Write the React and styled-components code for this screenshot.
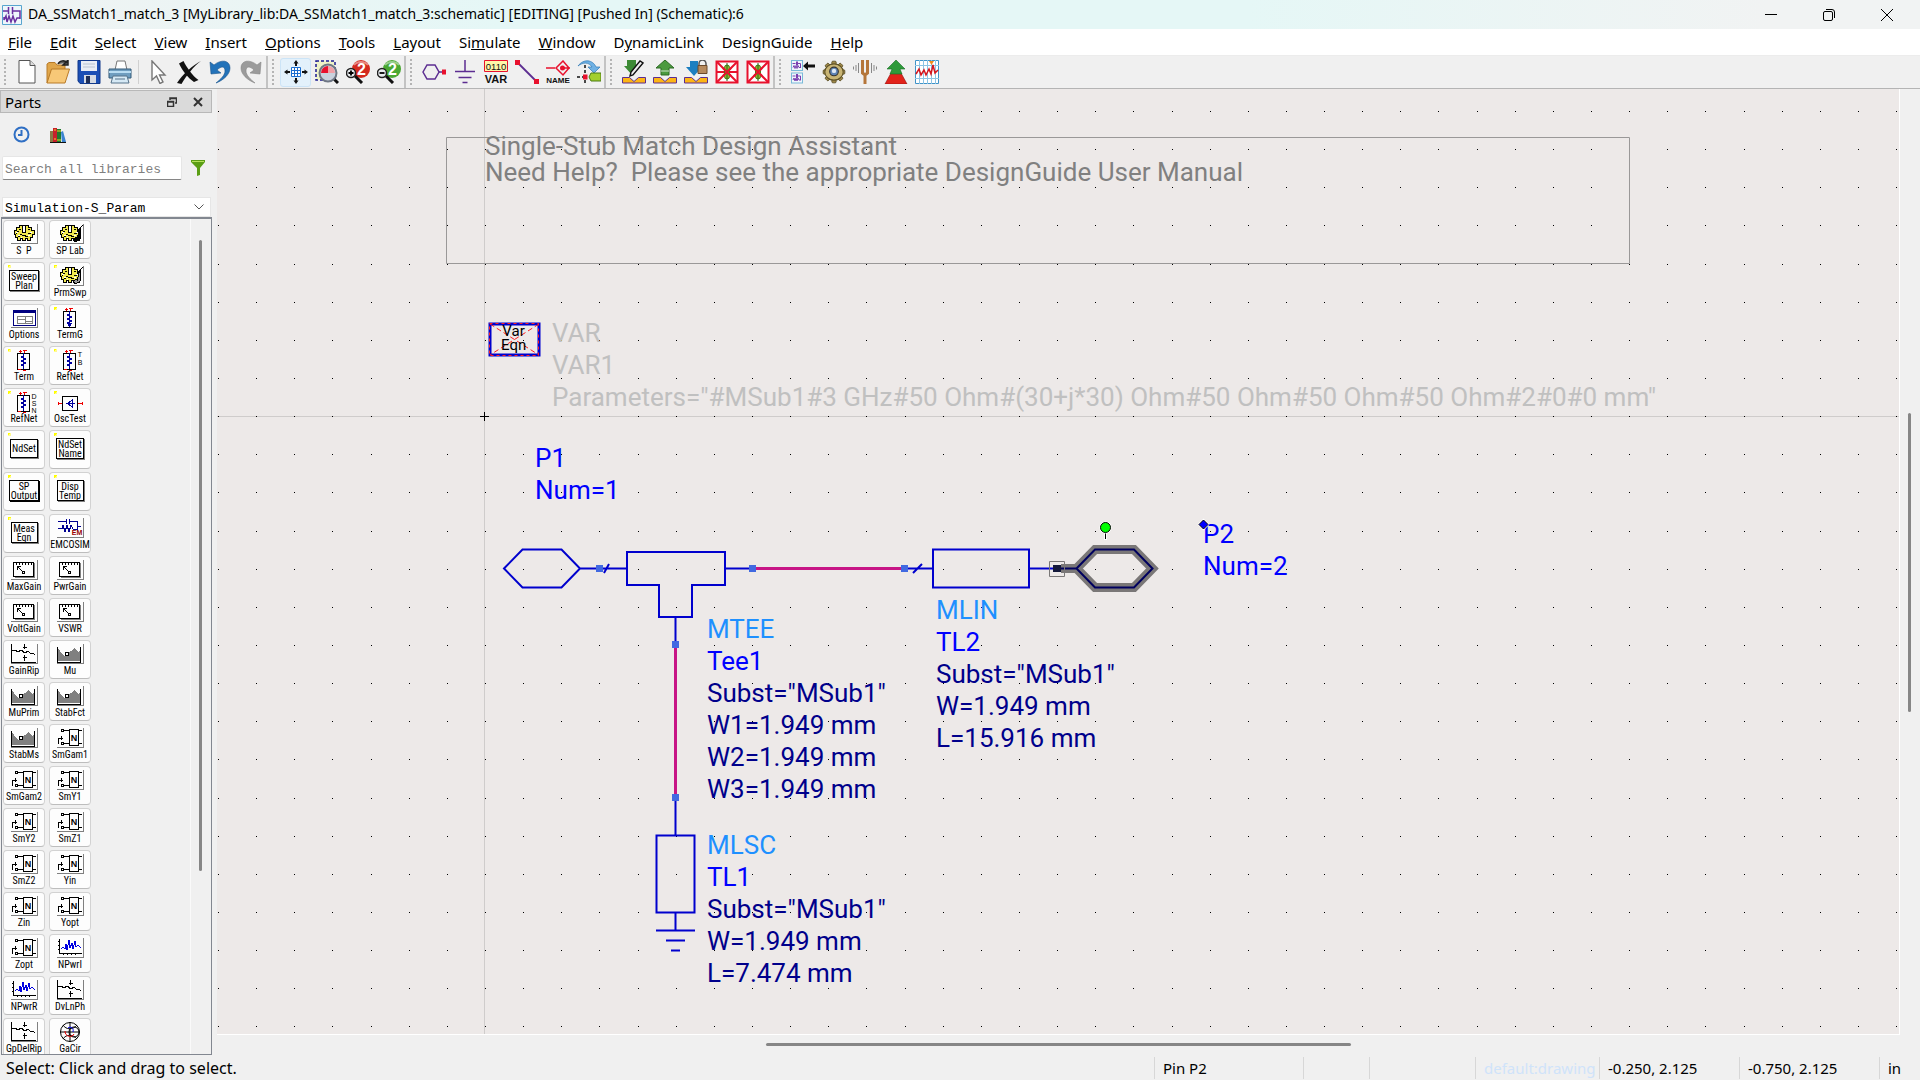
import React from "react";
import styled, { createGlobalStyle } from "styled-components";

const UI = `"Noto Sans", "Open Sans", sans-serif`;

const Global = createGlobalStyle`
  * { box-sizing: border-box; }
  body { margin: 0; background: #f0f0f0; color: #000; font-family: ${UI}; overflow: hidden; }
  button, input, select { font: inherit; color: inherit; margin: 0; }
  svg { display: block; flex: none; }
`;

/* ---------- window frame ---------- */
const Window = styled.div`
  display: flex;
  flex-direction: column;
  height: 100vh;
`;
const TitleBar = styled.header`
  display: flex;
  align-items: center;
  gap: 6px;
  height: 29px;
  padding: 0 4px 0 2px;
  background: linear-gradient(90deg, #f0f3f3 0%, #e5f7f6 26%, #e5f7f6 65%, #f1f3f3 92%);
`;
const Title = styled.h1`
  flex: 1;
  margin: 0;
  padding-bottom: 1px;
  font-size: 14px;
  line-height: 20px;
  font-weight: 400;
`;
const CaptionButtons = styled.div`
  display: flex;
`;
const CaptionButton = styled.button`
  display: grid;
  place-items: center;
  width: 58px;
  height: 28px;
  padding: 0;
  border: 0;
  background: none;
`;
const MenuBar = styled.nav`
  display: flex;
  gap: 18px;
  height: 27px;
  padding: 2px 8px 0;
  background: #fff;
  border-bottom: 1px solid #ececec;
`;
const MenuItem = styled.button`
  padding: 0;
  border: 0;
  background: none;
  font-size: 15px;
  line-height: 22px;
  height: 22px;
`;
const ToolBar = styled.div`
  display: flex;
  height: 33px;
  background: #f0f0f0;
  border-bottom: 1px solid #b4b4b4;
`;
const ToolGroup = styled.div`
  display: flex;
  align-items: center;
  position: relative;
  padding-left: ${(p) => (p.$first ? 11 : 12)}px;
  border-right: ${(p) => (p.$last ? "0" : "2px solid #c3c3c3")};
`;
const Handle = styled.span`
  position: absolute;
  left: 4px;
  top: 3px;
  width: 2px;
  height: 26px;
  background: repeating-linear-gradient(#b4b4b4 0 2px, transparent 2px 4px);
`;
const ToolButton = styled.button`
  display: grid;
  place-items: center;
  width: 31px;
  height: 29px;
  padding: 0;
  border-radius: 3px;
  border: 1px solid ${(p) => (p.$active ? "#cce4f7" : "transparent")};
  background: ${(p) => (p.$active ? "#e3f1fb" : "none")};
`;
const ToolGap = styled.span`
  width: 1px;
  height: 24px;
  margin: 0 3px;
  background: #d0d0d0;
`;
const Body = styled.div`
  display: flex;
  flex: 1;
  min-height: 0;
`;

/* ---------- parts dock ---------- */
const Dock = styled.aside`
  display: flex;
  flex-direction: column;
  width: 217px;
  padding: 1px 5px 0 0;
`;
const DockHeader = styled.div`
  display: flex;
  align-items: center;
  height: 23px;
  padding: 0 0 0 4px;
  background: #dadada;
  border: 1px solid #b8b8b8;
  font-size: 15px;
  line-height: 20px;
`;
const DockTitle = styled.h2`
  flex: 1;
  margin: 0;
  font-size: 15px;
  font-weight: 400;
`;
const PlainButton = styled.button`
  display: grid;
  place-items: center;
  width: ${(p) => p.$w || 26}px;
  height: 20px;
  padding: 0;
  border: 0;
  background: none;
`;
const DockTabs = styled.div`
  display: flex;
  align-items: center;
  gap: 11px;
  height: 43px;
  padding-left: 8px;
`;
const SearchRow = styled.div`
  display: flex;
  align-items: center;
  gap: 2px;
  padding-left: 2px;
  margin-bottom: 17px;
`;
const Search = styled.input`
  flex: 1;
  min-width: 0;
  height: 24px;
  padding: 3px 2px 0;
  border: 1px solid #e6e6e6;
  border-bottom: 1px solid #868686;
  border-radius: 2px;
  background: #fff;
  font: 13px "Liberation Mono", monospace;
  &::placeholder { color: #7f7f7f; opacity: 1; }
`;
const PickerWrap = styled.label`
  display: grid;
  grid-template-columns: 1fr 22px;
  align-items: center;
  margin: 0 1px 0 2px;
  height: 20px;
  background: #fff;
  border: 1px solid #e6e6e6;
  svg { grid-area: 1 / 2; justify-self: center; pointer-events: none; }
`;
const Picker = styled.select`
  grid-area: 1 / 1 / 2 / 3;
  appearance: none;
  height: 18px;
  padding: 2px 2px 0;
  border: 0;
  background: none;
  font: 13px "Liberation Mono", monospace;
`;
const PartsFrame = styled.div`
  display: flex;
  flex: 1;
  min-height: 0;
  margin: 0 0 0 1px;
  border: 1px solid #828790;
  border-top-width: 2px;
`;
const PartsGrid = styled.div`
  display: grid;
  flex: 1;
  grid-template-columns: repeat(auto-fill, 42px);
  grid-auto-rows: 39px;
  gap: 3px 4px;
  align-content: start;
  padding: 1px 96px 0 1px;
  overflow: hidden;
  border-right: 1px solid #fafafa;
`;
const Part = styled.button`
  position: relative;
  display: flex;
  flex-direction: column;
  align-items: center;
  justify-content: ${(p) => (p.$boxed ? "center" : "flex-start")};
  padding: ${(p) => (p.$boxed ? "0 0 2px" : "2px 0 0")};
  border: 1px solid #d2d2d2;
  border-bottom-color: #bdbdbd;
  border-radius: 4px;
  background: #fdfdfd;
  font: 10px/10px "Liberation Sans Narrow", "Roboto Condensed", Roboto, sans-serif;
  white-space: pre;
`;
const Caption = styled.span`
  line-height: 11px;
`;
const Boxed = styled.span`
  display: grid;
  place-items: center;
  align-content: center;
  min-width: 27px;
  height: ${(p) => (p.$two ? 21 : 19)}px;
  padding: 0 1px;
  line-height: 9px;
  border: 1px solid #000;
  box-shadow: 1px 1px 0 ${(p) => (p.$heavy ? "#000" : "#808080")};
`;
const Mark = styled.i`
  position: absolute;
  left: 4px;
  top: 2px;
  width: 3px;
  height: 3px;
  background: linear-gradient(135deg, #ff0 50%, #fffa90 50%);
`;
const Track = styled.div`
  display: flex;
  flex-direction: ${(p) => (p.$across ? "row" : "column")};
  align-items: center;
  ${(p) => (p.$across ? "height" : "width")}: 20px;
  ${(p) => (p.$across ? "padding-bottom" : "padding-right")}: 2px;
  flex: none;
`;
const Space = styled.span`
  flex: ${(p) => p.$n} 1 0;
`;
const Thumb = styled.span`
  flex: ${(p) => p.$n} 1 0;
  ${(p) => (p.$across ? "height" : "width")}: 3px;
  border-radius: 2px;
  background: #868686;
`;

/* ---------- schematic ---------- */
const Work = styled.main`
  display: grid;
  flex: 1;
  min-width: 0;
  grid-template-columns: 1fr 20px;
  grid-template-rows: 1fr 20px;
`;
const Canvas = styled.div`
  position: relative;
  overflow: hidden;
  background: #ede9e8;
  border-right: 1px solid #fff;
  border-bottom: 1px solid #fff;
`;
const Drawing = styled.svg`
  position: absolute;
  left: 0;
  top: 0;
  overflow: visible;
`;
const Label = styled.div`
  position: absolute;
  left: ${(p) => p.$x}px;
  top: ${(p) => p.$y}px;
  font: ${(p) => p.$size || 26}px/${(p) => p.$lh || 32}px Roboto, sans-serif;
  color: ${(p) => p.$color || "#00008b"};
  text-align: ${(p) => (p.$center ? "center" : "left")};
  white-space: pre;
`;
const Line = styled.div`
  color: ${(p) => p.$color || "inherit"};
`;

/* ---------- status bar ---------- */
const StatusBar = styled.footer`
  display: flex;
  align-items: center;
  height: 25px;
  padding-left: 6px;
  font-size: 15px;
  line-height: 22px;
`;
const StatusText = styled.span`
  flex: 1;
  font-size: 16px;
`;
const StatusCell = styled.span`
  width: ${(p) => p.$w}px;
  height: 22px;
  padding-left: 8px;
  border-left: 1px solid #d7d7d7;
  color: ${(p) => (p.$faint ? "#cfe3fa" : "#000")};
  white-space: nowrap;
`;

/* ---------- tool bar icons ---------- */
const I = ({ children, s = 24 }) => (
  <svg width={s} height={s} viewBox="0 0 24 24" fill="none" aria-hidden="true">{children}</svg>
);
const Lens = ({ color, sign }) => (
  <I>
    <circle cx="15" cy="9" r="9" fill={color} />
    <path d="M8 5a8 6 0 0 1 14 0" stroke="#fff" strokeOpacity=".45" strokeWidth="2" />
    <text x="15.500" y="14.500" fontFamily="Liberation Sans" fontWeight="700" fontSize="16" fill="#fff" textAnchor="middle">2</text>
    <path d="M9 16l7 7" stroke="#111" strokeWidth="3" />
    <circle cx="5" cy="13" r="4.500" fill="#e9edf0" stroke="#222" strokeWidth="1.500" />
    <path d={sign === "+" ? "M2.500 13h5M5 10.500v5" : "M2.500 13h5"} stroke="#000" strokeWidth="1.800" />
  </I>
);
const Tray = () => <path d="M.5 17.500h7l4.500 4 4.500-4h7v5.500H.5z" fill="#fdb515" stroke="#5c2d91" />;
const Crossed = ({ full }) => (
  <I>
    <path d="M1.500 1.500h21v21h-21z" fill="#fff" stroke="#e8112d" strokeWidth="2" />
    <path d={full ? "M2 2l20 20M22 2L2 22M2 12h20" : "M2 2l20 20M22 2L2 22"} stroke="#e8112d" strokeWidth="2" />
    <rect x="9.500" y="5" width="5" height="14" rx="2.500" fill="#8fb52a" stroke="#4b7d14" />
    <path d="M12 3v18" stroke="#2b6a1d" />
    <path d="M8 8l8 8M16 8l-8 8" stroke="#e8112d" strokeWidth="2" />
  </I>
);
const MiniSch = ({ y }) => (
  <g stroke="#7a3fb0">
    <rect x=".5" y={y} width="11" height="10" fill="#eef6fb" stroke="#79b9d8" />
    <path d={`M1.500 ${y + 3}h3m1-2v4m1-4v4m0-2h3v4M2 ${y + 7}l1-2 1 3 1-3 1 3 1-3 1 2h2`} />
  </g>
);
const gearTeeth = [...Array(8)].map((_, i) => i * 45);

const icons = {
  New: <I><path d="M4 .5h11l5 5V23H4z" fill="#fff" stroke="#555" /><path d="M15 .5v5h5" fill="#ddd" stroke="#555" /></I>,
  Open: <I><path d="M1 23V4l2-1.500h6L11 5h8v4" fill="#e0a64a" stroke="#b87a28" /><path d="M1 23L5.500 9h18L19 23z" fill="#f7c877" stroke="#b87a28" /><path d="M12 4c2-4 7-4 9-1M22 0v5h-5z" stroke="#222" strokeWidth="1.500" fill="#222" fillOpacity=".7" /></I>,
  Save: <I><path d="M1 .5h22v23H3L1 21z" fill="#1b4fb5" stroke="#12398a" /><path d="M4 1h16v10H4z" fill="#e9eef5" /><path d="M6 4h12M6 7h12" stroke="#b9c4d2" /><path d="M7 15h12v8H7z" fill="#d5dbe4" /><path d="M9 16h4v7H9z" fill="#1f2f57" /></I>,
  Print: <I><path d="M7 10L9 1h8l2 9z" fill="#fff" stroke="#777" /><path d="M1 9h22v9H1z" fill="#6f9dbf" stroke="#345b78" /><path d="M1 12h22" stroke="#b9dcf2" strokeWidth="2" /><path d="M5 16h14l2 7H3z" fill="#d6e9f5" stroke="#56738a" /><path d="M7 19h10" stroke="#56738a" /></I>,
  Pointer: <I><path d="M6 1v19l4.500-4 3.500 7.500 3-1.500-3.500-7H19z" fill="#fff" stroke="#777" strokeWidth="1.400" /></I>,
  Delete: <I><path d="M2 3.500L6.500 1c3 6 9 15 15 19l-4.500 2C11 18 5.500 11 2 3.500z" fill="#111" /><path d="M24 1C16 5 5 15 0 23l4.500 1C9 16 17 6 24 1z" fill="#111" /></I>,
  Undo: <I><path d="M2 2l1 12 10-1-4-3c4-4 8-4 8 1 0 4-4 8-9 12 8-3 14-9 14-15C22 0 13-1 6 5z" fill="#2272b9" stroke="#15528c" strokeWidth=".6" /></I>,
  Redo: <I><path d="M22 2l-1 12-10-1 4-3c-4-4-8-4-8 1 0 4 4 8 9 12C8 20 2 14 2 8 2 0 11-1 18 5z" fill="#9b9b9b" stroke="#858585" strokeWidth=".6" /></I>,
  "View All": <I><path d="M7.500 7.500h9v9h-9zM10.500 7v10M13.500 7v10M7 10.500h10M7 13.500h10" stroke="#1b6ed0" fill="#fff" /><path d="M12 0l2.500 3.500H13V6h-2V3.500H9.500zM12 24l2.500-3.500H13V18h-2v2.500H9.500zM0 12l3.500-2.500V11H6v2H3.500v1.500zM24 12l-3.500-2.500V11H18v2h2.500v1.500z" fill="#111" /></I>,
  "Zoom Area": <I><path d="M1 1h19v19H1z" fill="#eef3c8" stroke="#1b1b90" strokeDasharray="3 2" strokeWidth="1.500" /><path d="M18 18l5 5" stroke="#111" strokeWidth="3" /><circle cx="13" cy="13" r="8.500" fill="#c9d2de" stroke="#6f7784" strokeWidth="2" /><path d="M13 13V6a7 7 0 0 0-7 7z" fill="#e8112d" /><path d="M13 6a7 7 0 0 1 7 7h-7z" fill="#f1a0a6" /></I>,
  "Zoom In": <Lens color="#d42a1e" sign="+" />,
  "Zoom Out": <Lens color="#4aa832" sign="-" />,
  Port: <I><path d="M1 12l4-7h8l4 7-4 7H5z" stroke="#5c2d91" strokeWidth="1.500" /><path d="M17 12h4" stroke="#5c2d91" strokeWidth="1.500" /><path d="M20 9.500h4v5h-4z" fill="#e8112d" /></I>,
  Ground: <I><path d="M12 0v11M2 11.500h20M5.500 17.500h13M9.500 22.500h5" stroke="#5c2d91" strokeWidth="1.500" /></I>,
  VAR: <I><path d="M.5.500h23v11H.5z" fill="#fff6a8" stroke="#e8112d" /><text x="12" y="9.500" fontFamily="Liberation Sans" fontSize="9.500" textAnchor="middle" fill="#111">0110</text><text x="12" y="23" fontFamily="Liberation Sans" fontWeight="700" fontSize="11" textAnchor="middle" fill="#111">VAR</text></I>,
  Wire: <I><path d="M2 2l20 20" stroke="#5c2d91" strokeWidth="1.800" /><path d="M0 0h5v5H0zM19 19h5v5h-5z" fill="#e8112d" /></I>,
  Name: <I><path d="M0 8h9m8 0h7M10 8l7-7 6 7-6 7z" stroke="#e8112d" strokeWidth="1.500" /><circle cx="16.500" cy="8" r="2.500" fill="#e8112d" /><text x="12" y="23" fontFamily="Liberation Sans" fontWeight="700" fontSize="8" textAnchor="middle" fill="#111">NAME</text></I>,
  Rotate: <I><path d="M1 6c6-8 15-6 18 1h4l-6 6-6-6h4C12 2 6 2 1 6z" fill="#6fb1e4" stroke="#2f78b5" strokeWidth=".7" /><path d="M8 5v19M0 17h9" stroke="#111" strokeWidth="1.500" strokeDasharray="3 2" /><path d="M14 13h10v8H14l-2-4z" fill="#a3cf2d" stroke="#4b7d14" /><path d="M6 14.500h4.500v5H6z" fill="#e8112d" /></I>,
  Push: <I><path d="M5 0h9v6h4l-8 9-8-9h3z" fill="#3d8a35" /><path d="M21 3L11 15l-3 1 1-4L18 1z" fill="#eee" stroke="#111" strokeWidth="1.400" /><Tray /></I>,
  Pop: <I><path d="M12 0l9 8h-5v7H8V8H3z" fill="#4c9a3f" stroke="#2d6a25" /><path d="M8 11h8" stroke="#cfe7cb" /><Tray /></I>,
  Locked: <I><path d="M6 1h8v6h4l-8 9-8-9h4z" fill="#1c7fc0" /><path d="M15 6V3.500a3.500 3.500 0 0 1 7 0V6" stroke="#555" strokeWidth="1.500" /><path d="M14 5.500h9v8h-9z" fill="#b68a5d" stroke="#6b4a2b" /><Tray /></I>,
  Deactivate: <Crossed full />,
  Short: <Crossed />,
  Tune: <I><MiniSch y={.5} /><MiniSch y={13} /><path d="M12 6l5-4.500V4.500h7v3h-7v3z" fill="#111" /></I>,
  Simulate: <I s={26}>{gearTeeth.map((a) => <rect key={a} x="10" y="2" width="4" height="5" rx="1" fill="#a08a4a" stroke="#4f431c" strokeWidth=".7" transform={`rotate(${a} 12 12)`} />)}<ellipse cx="12" cy="12" rx="8.500" ry="7.500" fill="#c9b574" stroke="#5d5026" /><circle cx="12" cy="11.500" r="4" fill="#5f84b5" stroke="#333" /><circle cx="12" cy="11" r="2" fill="#dfe9f5" /></I>,
  "Tuning Fork": <I><path d="M9.500 0v13l2.500 2v9M14.500 0v13l-2.500 2" stroke="#b5763a" strokeWidth="3" /><path d="M5.500 3v10M18.500 3v10M3 5v6M21 5v6M.5 6.500v3M23.500 6.500v3" stroke="#888" /></I>,
  Optimize: <I><path d="M7 13h10l6 11H1z" fill="#e2231a" stroke="#901010" strokeWidth=".6" /><path d="M12 0l9 9h-5l2 5H6l2-5H3z" fill="#2e9a3a" stroke="#156b22" strokeWidth=".6" /></I>,
  "Data Display": <I><path d="M.5.500h23v23H.5z" fill="#fff" stroke="#3f93c8" /><path d="M4.500 0v24M8.500 0v24M12.500 0v24M16.500 0v24M20.500 0v24M0 5.500h24M0 18.500h24" stroke="#8cc4e4" /><path d="M1 14l3-5 2 6 3-5 2 5 3-6 2 5 2-9 2 8 3-3" stroke="#d5161e" strokeWidth="1.500" /><path d="M14 1h5l-2.500 4z" fill="#f28a1a" /></I>,
};

const toolGroups = [
  ["New", "Open", "Save", "Print", "|", "Pointer", "Delete", "Undo", "Redo"],
  ["View All", "Zoom Area", "Zoom In", "Zoom Out"],
  ["Port", "Ground", "VAR", "Wire", "Name", "Rotate"],
  ["Push", "Pop", "Locked", "Deactivate", "Short"],
  ["Tune", "Simulate", "Tuning Fork", "Optimize", "Data Display"],
];

const menus = [
  ["", "F", "ile"], ["", "E", "dit"], ["", "S", "elect"], ["", "V", "iew"], ["", "I", "nsert"],
  ["", "O", "ptions"], ["", "T", "ools"], ["", "L", "ayout"], ["Si", "m", "ulate"], ["", "W", "indow"],
  ["D", "y", "namicLink"], ["DesignGuide", "", ""], ["", "H", "elp"],
];

/* ---------- part glyphs, drawn in a 40 x 22 cell ---------- */
const Cell = ({ children, plain }) => (
  <svg width="40" height="22" viewBox="0 0 40 22" fill="none" stroke="#000" shapeRendering="crispEdges" aria-hidden="true">
    {!plain && <path d="M7 20.500h26.500V1" stroke="#808080" />}
    {children}
  </svg>
);
const Gear = ({ pen }) => (
  <Cell>
    <path d="M10.500 7.500h2v-3h3v-2h9v2h3v3h3v4h-2v3h-2v3h-3v-2h-2v2h-3v-2h-2v2h-3v-3h-2v-3h-1z" fill="#f2ea4e" />
    <path d="M12 9.500h2M14 12.500h2M17 14.500h1M26 9.500h2M24 12.500h2" stroke="#fff" />
    <path d="M13 8.500h2M12 10.500h1M16 11.500h2M15 6.500h2M24 6.500h2M24 10.500h3M21 13.500h3M14 13.500h2M18 12.500h4" />
    <path d="M18.500 2.500h3v7h-3z" fill="#fff" />
    {pen && <path d="M33 2l-6 7M28.500 8.500l2-2v8c0 4-7 5-7 2 0-2 3-2 4-1z" fill={pen} stroke="#000" />}
  </Cell>
);
const Term = ({ side, ground }) => (
  <Cell plain>
    <path d="M13.500 4.500h12v16h-12z" />
    <path d="M19.500 4v3l-2 1 4 2-4 2 4 2-4 2 2 1v3" stroke="#0000a0" />
    {ground ? <path d="M17 16h5l-2.500 3z" fill="#0000a0" stroke="#0000a0" /> : <path d="M14 20.500h3M19 21.500h3" stroke="#e00" />}
    <path d="M15 2.500h3M16.500 1v3M19 1.500h4M20.500 1v3" stroke="#e00" />
    {side && [...side].map((c, i) => (
      <text key={i} x="30" y={8 + i * (side.length === 2 ? 8 : 7)} fontFamily="Liberation Sans" fontSize="7" fill="#000" stroke="none" textAnchor="middle">{c}</text>
    ))}
  </Cell>
);
const glyphs = {
  gear: <Gear />,
  gearBlack: <Gear pen="#000" />,
  gearPen: <Gear pen="#999" />,
  options: <Cell><path d="M9.500 3.500h22v15h-22z" fill="#fff" stroke="#000080" /><path d="M9 4.500h23" stroke="#000080" strokeWidth="3" /><path d="M13.500 9.500h15v7h-15zM21.500 9v8M13 12.500h8M22 14.500h6" stroke="#808080" /></Cell>,
  termG: <Term ground />,
  term: <Term />,
  refTB: <Term side="TB" />,
  refDSN: <Term side="DSN" />,
  osc: <Cell plain><path d="M12.500 5.500h15v14h-15z" /><path d="M16 12.500h9M22.500 9v7l-5-3.500z" stroke="#0000a0" /><path d="M9 12.500h3M28 12.500h4M8.500 11v3M32.500 11v3" stroke="#e00" /></Cell>,
  em: <Cell><path d="M8 4.500h8M16.500 2v5M19.500 2v5M20 4.500h7v8h-4M8 11.500h4l1-3 2 6 2-6 2 6 2-6 2 3M27 9.500h4" stroke="#000090" /><text x="27" y="18" fontFamily="Liberation Sans" fontWeight="700" fontSize="7" fill="#900" stroke="none" textAnchor="middle">EM</text></Cell>,
  meter: <Cell><path d="M30.500 4v14.500H11" stroke="#808080" /><path d="M9.500 3.500h20v14h-20z" fill="#fff" /><path d="M12.500 4v2M15.500 4v2M18.500 4v2M21.500 4v2M24.500 4v2M27.500 4v2M14 8l5 5M13.500 11V7.500H17M18.500 12.500h2v2h-2z" /></Cell>,
  ripple: <Cell><path d="M7.500 1v18H32" /><path d="M8 8l3-1 3 2 3-2 4 3 3-2 3 3 2-1 2 2M20.500 1v5M18.500 4h4M20.500 18v-6M18.500 14h4" /></Cell>,
  stab: <Cell><path d="M8 5l4 6 3 2 6-5 3-3 4 4 3-3v12H8z" fill="#808080" stroke="none" /><path d="M7.500 4v15h23V4" /><path d="M15 9.500h3v3h-3z" fill="#fff" /></Cell>,
  n: <Cell><path d="M19.500 2.500h9v16h-9zM13 3.500h6M13 16.500h6M29 3.500h3M29 16.500h3M11.500 2.500h2v2h-2zM11.500 15.500h2v2h-2zM8.500 17v-6H13M11 9v4" /><text x="24" y="14" fontFamily="Liberation Sans" fontWeight="700" fontSize="9" fill="#000" stroke="none" textAnchor="middle">N</text></Cell>,
  noise: <Cell><path d="M9.500 2v14.500H32M8 4.500h2M8 8.500h2M8 12.500h2M13.500 18v-1M17.500 18v-1M21.500 18v-1M25.500 18v-1" /><path d="M11 12l2-2 2 2 1-5 1 6 2-10 1 8 2-5 1 6 2-8 1 6 2-2 3 3" stroke="#0000e0" /></Cell>,
  smith: <Cell plain><g shapeRendering="auto"><circle cx="20" cy="11" r="9.500" /><path d="M10 11h20M20 1v20M13 4c3 5 10 5 14 0M13 18c3-5 10-5 14 0" /><circle cx="24" cy="11" r="5" /><path d="M15 10c0 6 7 7 9 3" stroke="#e00" /><path d="M18 7c3-2 6 0 5 4" stroke="#00e" /></g></Cell>,
};

const parts = [
  ["gear", "S  P"], ["gearBlack", "SP Lab"],
  [null, "Sweep Plan"], ["gearPen", "PrmSwp", 1],
  ["options", "Options"], ["termG", "TermG", 1],
  ["term", "Term", 1], ["refTB", "RefNet", 1],
  ["refDSN", "RefNet", 1], ["osc", "OscTest", 1],
  [null, "NdSet"], [null, "NdSet Name"],
  [null, "SP Output", 2], [null, "Disp Temp"],
  [null, "Meas Eqn"], ["em", "EMCOSIM"],
  ["meter", "MaxGain"], ["meter", "PwrGain"],
  ["meter", "VoltGain"], ["meter", "VSWR"],
  ["ripple", "GainRip"], ["stab", "Mu"],
  ["stab", "MuPrim"], ["stab", "StabFct"],
  ["stab", "StabMs"], ["n", "SmGam1"],
  ["n", "SmGam2"], ["n", "SmY1"],
  ["n", "SmY2"], ["n", "SmZ1"],
  ["n", "SmZ2"], ["n", "Yin"],
  ["n", "Zin"], ["n", "Yopt"],
  ["n", "Zopt"], ["noise", "NPwrI"],
  ["noise", "NPwrR"], ["ripple", "DvLnPh"],
  ["ripple", "GpDelRip"], ["smith", "GaCir"],
];

function PartButton({ glyph, name, mark }) {
  if (!glyph) {
    const words = name.split(" ");
    return (
      <Part $boxed type="button">
        <Mark />
        <Boxed $two={words.length > 1} $heavy={mark === 2}>
          {words.map((w) => <span key={w}>{w}</span>)}
        </Boxed>
      </Part>
    );
  }
  return (
    <Part type="button">
      {mark && <Mark />}
      {glyphs[glyph]}
      <Caption>{name}</Caption>
    </Part>
  );
}

/* ---------- schematic drawing ---------- */
const PITCH = 38.14;
const gridPath = () => {
  let d = "";
  for (let r = 0; r < 60; r++)
    for (let c = 0; c < 100; c++)
      d += `M${Math.round(1 + c * PITCH)} ${Math.round(22 + r * PITCH)}h1v1h-1z`;
  return d;
};
const GRID = gridPath();
const Node = ({ x, y }) => <rect x={x - 3.5} y={y - 3.5} width="7" height="7" fill="#4169e1" stroke="none" />;

function Schematic() {
  return (
    <Drawing width="100%" height="100%" fill="none" aria-hidden="true">
      <path d="M267.500 0v3000M0 327.500h4000" stroke="#cfcccb" />
      <path d={GRID} fill="#000" shapeRendering="crispEdges" />
      <path d="M229.500 48.500h1183v126h-1183z" stroke="#9a9898" />
      <path d="M263 327.500h9M267.500 323v9" stroke="#000" />
      <g>
        <path d="M273 235h49v31h-49z" stroke="#0000cd" strokeWidth="3" />
        <path d="M272.500 234.500h49v32h-49z" stroke="#ff2020" strokeDasharray="3 3" />
        <path d="M273 235l49 31M322 235l-49 31" stroke="#ff2020" strokeDasharray="5 3" />
      </g>
      <g stroke="#0000cd" strokeWidth="2">
        <path d="M287 479.500l18.500-19h39l18.500 19-18.500 19h-39zM363 479.500h47M387 484l5-9" />
        <path d="M410 463h98v33h-33v32h-33v-32h-32zM508 479.500h27M458.500 528v27" />
        <path d="M687 479.500h29M696 484l9-9M716 460.500h96v38h-96zM812 479.500h30" />
        <path d="M458.500 708v38M439.500 746.500h38v77h-38zM458.500 823v19M439 841.500h39M449 851.500h19M454 861.500h9" />
      </g>
      <path d="M535 479.500h152M458.500 555v153" stroke="#c71585" strokeWidth="3" />
      <Node x={382.5} y={479.5} />
      <Node x={535.5} y={479.5} />
      <Node x={687.5} y={479.5} />
      <Node x={458.5} y={555.5} />
      <Node x={458.5} y={708.5} />
      <path d="M844 479.500h15M859.500 479.500l18.500-19h39l18.500 19-18.500 19h-39z" stroke="#7a7777" strokeWidth="9" />
      <path d="M844 479.500h15M859.500 479.500l18.500-19h39l18.500 19-18.500 19h-39z" stroke="#00005e" strokeWidth="2" />
      <path d="M832.500 472.500h15v15h-15z" stroke="#7a7777" />
      <path d="M836 476h8v7h-8z" fill="#14183a" />
      <path d="M888.500 440v11" stroke="#fff" strokeWidth="3" />
      <path d="M888.500 443v7" stroke="#000" />
      <circle cx="888.500" cy="438.500" r="6" fill="#fff" />
      <circle cx="888.500" cy="438.500" r="5" fill="#0f0" stroke="#000" />
    </Drawing>
  );
}

export default function App() {
  return (
    <Window>
      <Global />
      <TitleBar>
        <svg width="20" height="20" viewBox="0 0 20 20" fill="none" aria-hidden="true">
          <path d="M.5.500h19v19H.5z" fill="#eef6fb" stroke="#58a5cf" />
          <path d="M1 6h5M6.500 2v7M10.500 2v7M11 6h7v8M2 12v3l2-4 1 6 2-6 2 6 2-6 2 6 2-4h3" stroke="#6a2fa0" strokeWidth="1.500" />
        </svg>
        <Title>DA_SSMatch1_match_3 [MyLibrary_lib:DA_SSMatch1_match_3:schematic] [EDITING] [Pushed In] (Schematic):6</Title>
        <CaptionButtons>
          <CaptionButton aria-label="Minimize"><svg width="12" height="12" stroke="#000"><path d="M0 5.500h12" /></svg></CaptionButton>
          <CaptionButton aria-label="Restore"><svg width="12" height="12" fill="none" stroke="#000"><rect x=".5" y="2.500" width="9" height="9" rx="1.500" /><path d="M3 .5h6a2.500 2.500 0 0 1 2.500 2.500v6" /></svg></CaptionButton>
          <CaptionButton aria-label="Close"><svg width="12" height="12" stroke="#000"><path d="M0 0l12 12M12 0L0 12" /></svg></CaptionButton>
        </CaptionButtons>
      </TitleBar>
      <MenuBar>
        {menus.map(([a, u, b]) => (
          <MenuItem key={a + u + b} type="button">{a}<u>{u}</u>{b}</MenuItem>
        ))}
      </MenuBar>
      <ToolBar>
        {toolGroups.map((g, i) => (
          <ToolGroup key={i} $first={i === 0} $last={i === toolGroups.length - 1}>
            <Handle />
            {g.map((n) => n === "|"
              ? <ToolGap key={n} />
              : <ToolButton key={n} type="button" aria-label={n} $active={n === "View All"}>{icons[n]}</ToolButton>)}
          </ToolGroup>
        ))}
      </ToolBar>
      <Body>
        <Dock>
          <DockHeader>
            <DockTitle>Parts</DockTitle>
            <PlainButton aria-label="Float"><svg width="10" height="10" fill="none" stroke="#333"><path d="M3 3V1h6.500v5H8M3 1.500h7" strokeWidth="1.500" /><path d="M.5 4.500h6v5h-6zM0 5h7" strokeWidth="1.500" /></svg></PlainButton>
            <PlainButton aria-label="Close parts"><svg width="10" height="10" stroke="#333" strokeWidth="2"><path d="M1 1l8 8M9 1L1 9" /></svg></PlainButton>
          </DockHeader>
          <DockTabs>
            <PlainButton aria-label="Recent"><svg width="17" height="17" fill="none" stroke="#2f6fc4" strokeWidth="2"><circle cx="8.500" cy="8.500" r="7" /><path d="M8.500 4v5H5" /></svg></PlainButton>
            <PlainButton aria-label="Libraries">
              <svg width="16" height="16"><path d="M0 4h3v12H0z" fill="#8a7a45" /><path d="M3 1h4v15H3z" fill="#c8202b" /><path d="M4 3h2M4 12h2" stroke="#f5d020" /><path d="M7 2h4v14H7z" fill="#1f7a2d" /><path d="M7 4h4M7 13h4" stroke="#f5d020" /><path d="M11 5l2-1 3 11-4 1z" fill="#3b83d0" /><path d="M0 15.500h16" stroke="#111" /></svg>
            </PlainButton>
          </DockTabs>
          <SearchRow>
            <Search aria-label="Search all libraries" placeholder="Search all libraries" />
            <PlainButton $w={28} aria-label="Filter"><svg width="14" height="16"><path d="M0 0h14v2L9 8v7l-3 1V8L0 2z" fill="#5a9e14" /><path d="M1 1.500h12" stroke="#b6e05a" /></svg></PlainButton>
          </SearchRow>
          <PickerWrap>
            <Picker aria-label="Library"><option>Simulation-S_Param</option></Picker>
            <svg width="10" height="6" fill="none" stroke="#555"><path d="M.5.500l4.500 4.500 4.500-4.500" /></svg>
          </PickerWrap>
          <PartsFrame>
            <PartsGrid>
              {parts.map(([g, n, m], i) => <PartButton key={i} glyph={g} name={n} mark={m} />)}
            </PartsGrid>
            <Track><Space $n={21} /><Thumb $n={631} /><Space $n={183} /></Track>
          </PartsFrame>
        </Dock>
        <Work>
          <Canvas>
            <Schematic />
            <Label $x={268} $y={44} $lh={26} $color="#808080">{"Single-Stub Match Design Assistant\nNeed Help?  Please see the appropriate DesignGuide User Manual"}</Label>
            <Label $x={335} $y={228} $color="#c0c0c0">{'VAR\nVAR1\nParameters="#MSub1#3 GHz#50 Ohm#(30+j*30) Ohm#50 Ohm#50 Ohm#50 Ohm#2#0#0 mm"'}</Label>
            <Label $x={284} $y={235} $size={15} $lh={14} $color="#000" $center>{"Var\nEqn"}</Label>
            <Label $x={318} $y={353} $color="#0000ff">{"P1\nNum=1"}</Label>
            <Label $x={986} $y={429} $color="#0000ff">{"P2\nNum=2"}</Label>
            <Label $x={490} $y={524}>
              <Line $color="#1e90ff">MTEE</Line>
              <Line $color="#0000ff">Tee1</Line>
              {'Subst="MSub1"\nW1=1.949 mm\nW2=1.949 mm\nW3=1.949 mm'}
            </Label>
            <Label $x={719} $y={505}>
              <Line $color="#1e90ff">MLIN</Line>
              <Line $color="#0000ff">TL2</Line>
              {'Subst="MSub1"\nW=1.949 mm\nL=15.916 mm'}
            </Label>
            <Label $x={490} $y={740}>
              <Line $color="#1e90ff">MLSC</Line>
              <Line $color="#0000ff">TL1</Line>
              {'Subst="MSub1"\nW=1.949 mm\nL=7.474 mm'}
            </Label>
            <Drawing width="100%" height="100%" pointerEvents="none" aria-hidden="true">
              <path d="M986.500 429.500l6 6-6 6-6-6z" fill="#fff" />
              <path d="M986.500 431l4.500 4.500-4.500 4.500-4.500-4.500z" fill="#00f" stroke="#000" />
            </Drawing>
          </Canvas>
          <Track><Space $n={324} /><Thumb $n={298} /><Space $n={323} /></Track>
          <Track $across><Space $n={549} /><Thumb $across $n={584} /><Space $n={549} /></Track>
        </Work>
      </Body>
      <StatusBar>
        <StatusText>Select: Click and drag to select.</StatusText>
        <StatusCell $w={149}>Pin P2</StatusCell>
        <StatusCell $w={66} />
        <StatusCell $w={106} />
        <StatusCell $w={124} $faint>default:drawing</StatusCell>
        <StatusCell $w={140}>-0.250, 2.125</StatusCell>
        <StatusCell $w={140}>-0.750, 2.125</StatusCell>
        <StatusCell $w={41}>in</StatusCell>
      </StatusBar>
    </Window>
  );
}
